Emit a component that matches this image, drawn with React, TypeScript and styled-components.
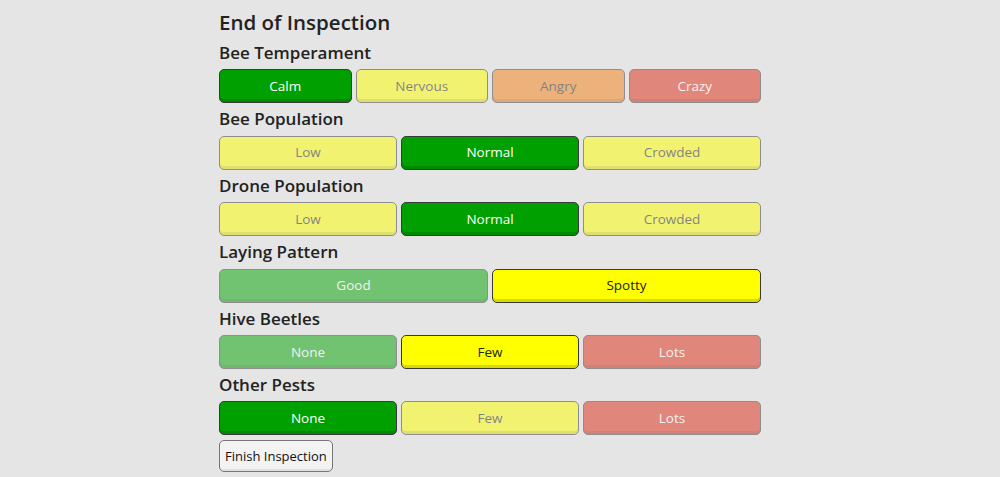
import React from "react";
import styled, {createGlobalStyle} from "styled-components";

type Tone = 'green' | 'yellow' | 'orange' | 'red';

const tones: Record<Tone, {bg: string, fg: string}> = {
  green: {bg: '#00a000', fg: '#ffffff'},
  yellow: {bg: '#ffff00', fg: '#222222'},
  orange: {bg: '#f57f15', fg: '#222222'},
  red: {bg: '#df2913', fg: '#ffffff'},
};

type Option = {label: string, tone: Tone};

const sections: {title: string, options: Option[], selected: number}[] = [
  {
    title: 'Bee Temperament', selected: 0, options: [
      {label: 'Calm', tone: 'green'}, {label: 'Nervous', tone: 'yellow'},
      {label: 'Angry', tone: 'orange'}, {label: 'Crazy', tone: 'red'},
    ]
  },
  {
    title: 'Bee Population', selected: 1, options: [
      {label: 'Low', tone: 'yellow'}, {label: 'Normal', tone: 'green'}, {label: 'Crowded', tone: 'yellow'},
    ]
  },
  {
    title: 'Drone Population', selected: 1, options: [
      {label: 'Low', tone: 'yellow'}, {label: 'Normal', tone: 'green'}, {label: 'Crowded', tone: 'yellow'},
    ]
  },
  {
    title: 'Laying Pattern', selected: 1, options: [
      {label: 'Good', tone: 'green'}, {label: 'Spotty', tone: 'yellow'},
    ]
  },
  {
    title: 'Hive Beetles', selected: 1, options: [
      {label: 'None', tone: 'green'}, {label: 'Few', tone: 'yellow'}, {label: 'Lots', tone: 'red'},
    ]
  },
  {
    title: 'Other Pests', selected: 0, options: [
      {label: 'None', tone: 'green'}, {label: 'Few', tone: 'yellow'}, {label: 'Lots', tone: 'red'},
    ]
  },
];

const App = () => {
  return (
    <>
      <GlobalStyle/>
      <PageStyled>
        <Title>End of Inspection</Title>
        {sections.map(section => (
          <Section key={section.title}>
            <SectionTitle>{section.title}</SectionTitle>
            <ChoiceRow $count={section.options.length}>
              {section.options.map((option, i) => (
                <ChoiceButton key={option.label} $tone={option.tone} $active={i === section.selected}>
                  {option.label}
                </ChoiceButton>
              ))}
            </ChoiceRow>
          </Section>
        ))}
        <FinishButton>Finish Inspection</FinishButton>
      </PageStyled>
    </>
  )
}

const GlobalStyle = createGlobalStyle`
  html, body {
    margin: 0;
    background: #e5e5e5;
    font-family: "Open Sans", "Noto Sans", sans-serif;
    color: #222;
  }
`
const PageStyled = styled.div`
  display: flex;
  flex-direction: column;
  width: 542px;
  padding: 8px 0 0 219px;
`
const Title = styled.div`
  font-size: 20.5px;
  line-height: 29px;
  font-weight: 600;
`
const Section = styled.div`
  display: flex;
  flex-direction: column;
`
const SectionTitle = styled.div`
  font-size: 17px;
  font-weight: 600;
  line-height: 32.4px;
`
const ChoiceRow = styled.div<{ $count: number }>`
  display: grid;
  grid-template-columns: repeat(${({$count}) => $count}, 1fr);
  gap: 4px;
`
const ChoiceButton = styled.button<{ $tone: Tone, $active: boolean }>`
  height: 34px;
  border: 1px solid #3a3a3a;
  border-radius: 5px;
  background: ${({$tone}) => tones[$tone].bg};
  color: ${({$tone}) => tones[$tone].fg};
  box-shadow: inset 0 -3px 0 rgba(0, 0, 0, 0.15);
  opacity: ${({$active}) => $active ? 1 : 0.5};
  font-family: inherit;
  font-size: 13.5px;
  padding: 0 0 1px;
  cursor: pointer;
`
const FinishButton = styled.button`
  align-self: flex-start;
  margin-top: 5px;
  height: 32px;
  padding: 0 5px;
  border: 1px solid #777;
  border-radius: 5px;
  background: #f3f3f3;
  box-shadow: inset 0 -2px 0 rgba(0, 0, 0, 0.08);
  font-family: inherit;
  font-size: 13px;
  color: #111;
`
export default App;
